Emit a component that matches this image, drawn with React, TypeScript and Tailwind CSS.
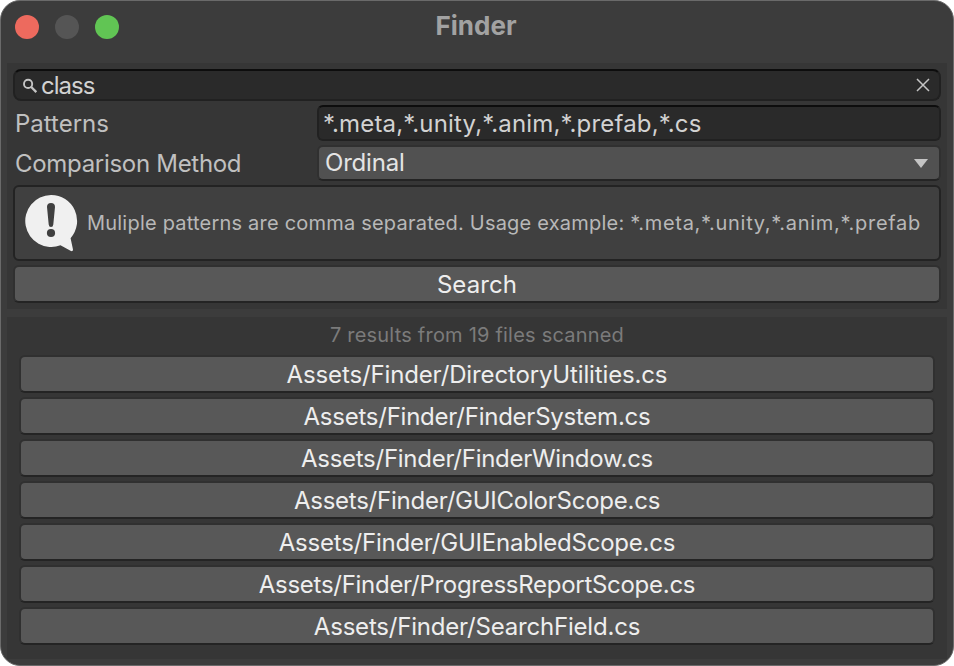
const results = [
  { path: 'Assets/Finder/DirectoryUtilities.cs', tracking: 'tracking-[-0.14px]' },
  { path: 'Assets/Finder/FinderSystem.cs', tracking: 'tracking-[-0.24px]' },
  { path: 'Assets/Finder/FinderWindow.cs', tracking: 'tracking-[-0.27px]' },
  { path: 'Assets/Finder/GUIColorScope.cs', tracking: 'tracking-[-0.24px]' },
  { path: 'Assets/Finder/GUIEnabledScope.cs', tracking: 'tracking-[-0.22px]' },
  { path: 'Assets/Finder/ProgressReportScope.cs', tracking: 'tracking-[-0.28px]' },
  { path: 'Assets/Finder/SearchField.cs', tracking: 'tracking-[-0.2px]' },
];

const buttonClass =
  'flex h-[38px] w-full shrink-0 items-center justify-center rounded-[6px] border-2 border-[#303030] border-b-[#242424] bg-[#585858] pt-[2px] text-[24px] leading-8 text-[#eeeeee]';

function TitleBar() {
  return (
    <header className="relative flex h-[62px] shrink-0 items-start px-[14px] pt-[14px]">
      <div className="flex gap-4">
        <span className="size-6 rounded-full bg-[#ed6a5e]" />
        <span className="size-6 rounded-full bg-[#555555]" />
        <span className="size-6 rounded-full bg-[#61c554]" />
      </div>
      <h1 className="absolute inset-x-0 top-[9px] pr-[2px] text-center text-[26px] leading-8 font-bold text-[#a2a2a2]">
        Finder
      </h1>
    </header>
  );
}

function SearchField() {
  return (
    <div className="flex h-8 items-center rounded-[8px] border-2 border-[#212121] border-t-[#0d0d0d] bg-[#2a2a2a] pr-[9px] pl-2 text-[#d2d2d2]">
      <svg className="h-4 w-4 shrink-0" viewBox="0 0 16 16" fill="none" stroke="#c4c4c4">
        <circle cx="5.1" cy="6.9" r="4.1" strokeWidth="1.9" />
        <path d="M8 9.8L13.3 15.1" strokeWidth="2.3" />
      </svg>
      <span className="ml-[2px] pt-px text-[24px] leading-[27px] tracking-[-1px]">class</span>
      <svg className="ml-auto h-3.5 w-3.5" viewBox="0 0 14 14" fill="none" stroke="#c4c4c4" strokeWidth="1.5">
        <path d="M1 1L13 13M13 1L1 13" />
      </svg>
    </div>
  );
}

export default function App() {
  return (
    <div className="h-[666px] w-[954px] bg-white font-['Inter',sans-serif]">
      <main className="flex h-full flex-col overflow-hidden rounded-[20px] border border-[#6a6a6a] bg-[#3c3c3c]">
        <TitleBar />
        <section className="mx-1.5 flex h-[246px] shrink-0 flex-col gap-1 bg-[#363636] px-1.5 pt-1.5">
          <SearchField />
          <div className="flex h-9 items-center text-[24px]">
            <label className="w-[304px] pt-[2px] pl-0.5 text-[#c0c0c0]">Patterns</label>
            <div className="flex h-9 flex-1 items-center rounded-[6px] border-2 border-[#212121] border-t-[#0d0d0d] bg-[#2a2a2a] pt-[2px] pl-1 leading-[30px] tracking-[0.18px] text-[#d2d2d2]">
              *.meta,*.unity,*.anim,*.prefab,*.cs
            </div>
          </div>
          <div className="flex h-9 items-center text-[24px]">
            <label className="w-[304px] pt-[2px] pl-0.5 tracking-[-0.3px] text-[#c0c0c0]">Comparison Method</label>
            <div className="flex h-9 flex-1 items-center justify-between rounded-[6px] border-2 border-[#303030] border-b-[#242424] bg-[#515151] pr-[11px] pl-1.5 leading-8 text-[#e4e4e4]">
              <span className="tracking-[-0.2px]">Ordinal</span>
              <svg className="h-[9px] w-[14px]" viewBox="0 0 14 9" fill="#c4c4c4">
                <path d="M0 0H14L7 9Z" />
              </svg>
            </div>
          </div>
          <div className="flex h-[76px] shrink-0 items-center rounded-[6px] border-2 border-[#232323] bg-[#404040] pl-[10px] text-[20px] text-[#b8b8b8]">
            <svg className="h-[57px] w-[53px] shrink-0" viewBox="0 0 53 57">
              <path
                d="M26 0A26 26 0 1 0 35.5 50.3L45.5 55.8Q48 57 48 54.5L45.6 43.2A26 26 0 0 0 26 0Z"
                fill="#f0f0f0"
              />
              <path d="M22 12Q22 8 26 8Q30 8 30 12L28.3 29.5Q28.1 32 26 32Q23.9 32 23.7 29.5Z" fill="#404040" />
              <circle cx="26" cy="38" r="4.1" fill="#404040" />
            </svg>
            <p className="ml-[9px] tracking-[0.21px] whitespace-nowrap">
              Muliple patterns are comma separated. Usage example:{' '}
              <span className="tracking-[0.71px]">*.meta,*.unity,*.anim,*.prefab</span>
            </p>
          </div>
          <button className={buttonClass}>
            <span className="tracking-[0.1px]">Search</span>
          </button>
        </section>
        <section className="mx-1.5 mt-2 flex h-[342px] shrink-0 flex-col gap-1 bg-[#363636] px-3 pt-1.5">
          <p className="h-7 text-center text-[20px] leading-6 tracking-[0.21px] text-[#7b7b7b]">
            7 results from 19 files scanned
          </p>
          {results.map(({ path, tracking }) => (
            <button key={path} className={buttonClass}>
              <span className={tracking}>{path}</span>
            </button>
          ))}
        </section>
      </main>
    </div>
  );
}
